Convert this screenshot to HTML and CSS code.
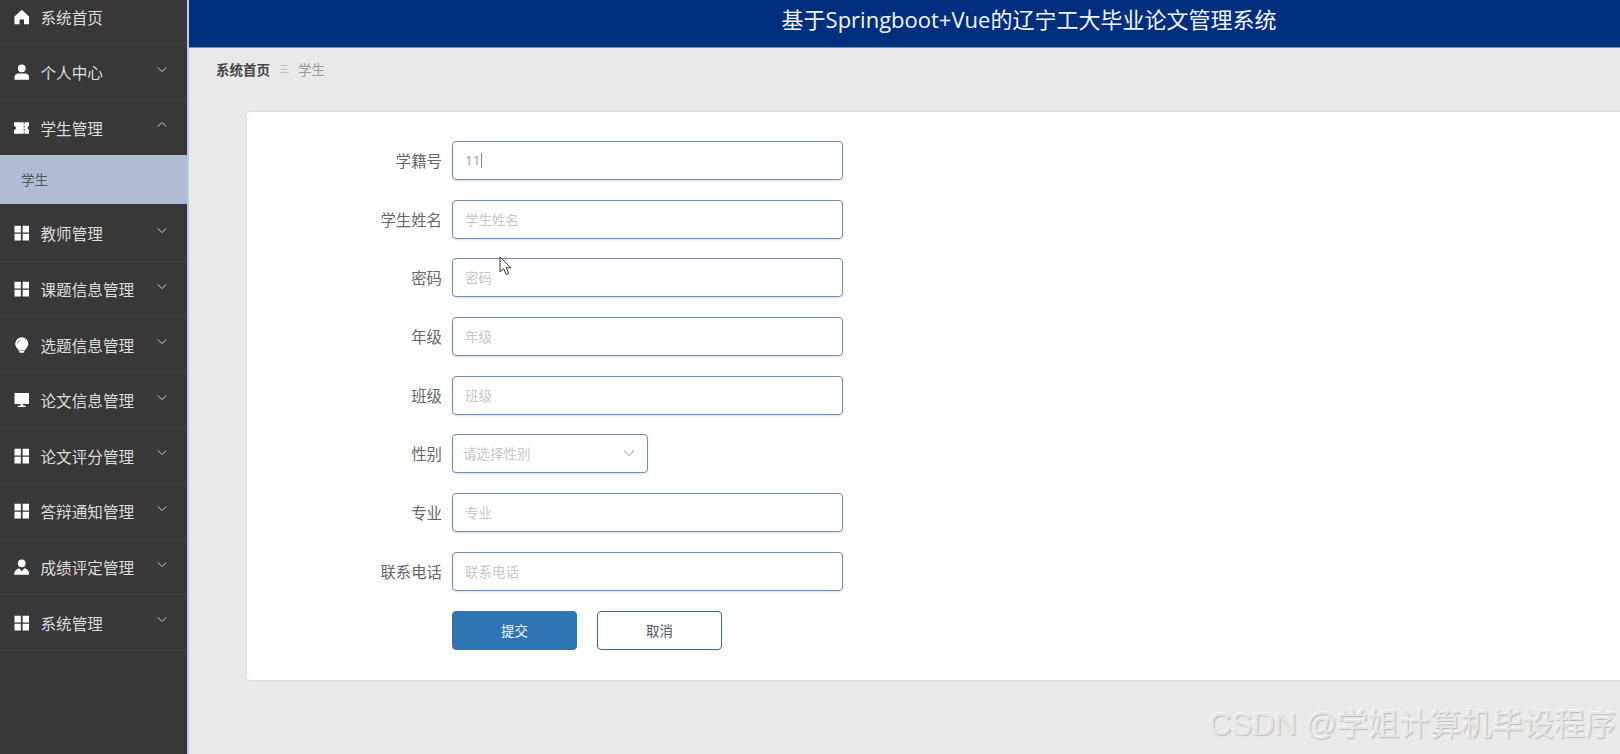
FILE: index.html
```html
<!DOCTYPE html>
<html lang="zh-CN">
<head>
    <meta charset="UTF-8">
    <title>辽宁工大毕业论文管理系统</title>
    <link rel="stylesheet" href="styles.css">
</head>
<body>
    <svg class="svg-defs" width="0" height="0">
        <symbol id="i-grid" viewBox="0 0 16 16"><path d="M.5.500h6.600v7H.5zM8.900.500h6.600v7H8.900zM.5 8.800h6.600v7H.5zM8.900 8.800h6.600v7H8.900z"/></symbol>
        <symbol id="i-down" viewBox="0 0 12 8"><path d="M1 1.500l5 5 5-5" fill="none" stroke="currentColor" stroke-width="1.100"/></symbol>
        <symbol id="i-up" viewBox="0 0 12 8"><path d="M1 6.500l5-5 5 5" fill="none" stroke="currentColor" stroke-width="1.100"/></symbol>
    </svg>

    <aside class="sidebar">
        <ul class="menu">
            <li class="menu-item menu-first">
                <svg class="icon" viewBox="0 0 16 16"><path d="M8 .5L.5 7.500V15.500h5.200v-5h4.600v5h5.200V7.500z"/></svg>
                <span class="menu-text">系统首页</span>
            </li>
            <li class="menu-item">
                <svg class="icon" viewBox="0 0 16 16"><circle cx="8" cy="4.200" r="4"/><path d="M.5 16v-3C.5 10.800 2.500 9.500 4.800 9.500h6.400c2.300 0 4.300 1.300 4.300 3.500v3z"/></svg>
                <span class="menu-text">个人中心</span>
                <svg class="arrow"><use href="#i-down"/></svg>
            </li>
            <li class="menu-item">
                <svg class="icon" viewBox="0 0 16 16"><path d="M0 2h16v4a2 2 0 0 0 0 4v4H0v-4a2 2 0 0 0 0-4z"/><path d="M10.500 2v12" stroke="#383838" stroke-width="1" stroke-dasharray="2 1.500"/></svg>
                <span class="menu-text">学生管理</span>
                <svg class="arrow"><use href="#i-up"/></svg>
            </li>
            <li class="menu-sub">学生</li>
            <li class="menu-item">
                <svg class="icon"><use href="#i-grid"/></svg>
                <span class="menu-text">教师管理</span>
                <svg class="arrow"><use href="#i-down"/></svg>
            </li>
            <li class="menu-item">
                <svg class="icon"><use href="#i-grid"/></svg>
                <span class="menu-text">课题信息管理</span>
                <svg class="arrow"><use href="#i-down"/></svg>
            </li>
            <li class="menu-item">
                <svg class="icon" viewBox="0 0 16 16"><path d="M8 0a6.800 6.800 0 0 0-6.800 6.800c0 2.400 1.400 3.800 2.400 5.100.5.600.8 1.100.9 1.700h7c.1-.6.400-1.100.9-1.700 1-1.300 2.400-2.700 2.400-5.100A6.800 6.800 0 0 0 8 0zM5.500 14.300h5V16h-5z"/><path d="M3.600 6.500C3.700 4.400 5 3 6.800 2.600" fill="none" stroke="#777" stroke-width="0.800"/></svg>
                <span class="menu-text">选题信息管理</span>
                <svg class="arrow"><use href="#i-down"/></svg>
            </li>
            <li class="menu-item">
                <svg class="icon" viewBox="0 0 16 16"><path d="M.5.800h15v11.200H.5zM6.500 12.500h3V14H12v1.200H4V14h2.500z"/></svg>
                <span class="menu-text">论文信息管理</span>
                <svg class="arrow"><use href="#i-down"/></svg>
            </li>
            <li class="menu-item">
                <svg class="icon"><use href="#i-grid"/></svg>
                <span class="menu-text">论文评分管理</span>
                <svg class="arrow"><use href="#i-down"/></svg>
            </li>
            <li class="menu-item">
                <svg class="icon"><use href="#i-grid"/></svg>
                <span class="menu-text">答辩通知管理</span>
                <svg class="arrow"><use href="#i-down"/></svg>
            </li>
            <li class="menu-item">
                <svg class="icon" viewBox="0 0 16 16"><circle cx="8" cy="4.200" r="4"/><path d="M0 16c.3-3.700 2-5.800 5.200-6.700L8 12.500l2.800-3.200c3.200.9 4.900 3 5.200 6.700z"/></svg>
                <span class="menu-text">成绩评定管理</span>
                <svg class="arrow"><use href="#i-down"/></svg>
            </li>
            <li class="menu-item">
                <svg class="icon"><use href="#i-grid"/></svg>
                <span class="menu-text">系统管理</span>
                <svg class="arrow"><use href="#i-down"/></svg>
            </li>
        </ul>
    </aside>

    <div class="content">
        <header class="topbar">
            <h1 class="title">基于Springboot+Vue的辽宁工大毕业论文管理系统</h1>
        </header>

        <main class="main">
            <nav class="breadcrumb">
                <span class="crumb-home">系统首页</span>
                <span class="crumb-sep">三</span>
                <span class="crumb-now">学生</span>
            </nav>

            <section class="card">
                <div class="form-row">
                    <label class="form-label">学籍号</label>
                    <div class="input"><span class="value">11</span><span class="caret"></span></div>
                </div>
                <div class="form-row">
                    <label class="form-label">学生姓名</label>
                    <div class="input"><span class="placeholder">学生姓名</span></div>
                </div>
                <div class="form-row">
                    <label class="form-label">密码</label>
                    <div class="input"><span class="placeholder">密码</span></div>
                </div>
                <div class="form-row">
                    <label class="form-label">年级</label>
                    <div class="input"><span class="placeholder">年级</span></div>
                </div>
                <div class="form-row">
                    <label class="form-label">班级</label>
                    <div class="input"><span class="placeholder">班级</span></div>
                </div>
                <div class="form-row">
                    <label class="form-label">性别</label>
                    <div class="input select">
                        <span class="placeholder">请选择性别</span>
                        <svg class="select-arrow"><use href="#i-down"/></svg>
                    </div>
                </div>
                <div class="form-row">
                    <label class="form-label">专业</label>
                    <div class="input"><span class="placeholder">专业</span></div>
                </div>
                <div class="form-row">
                    <label class="form-label">联系电话</label>
                    <div class="input"><span class="placeholder">联系电话</span></div>
                </div>
                <div class="form-actions">
                    <button class="btn btn-primary">提交</button>
                    <button class="btn btn-plain">取消</button>
                </div>
            </section>
        </main>
    </div>

    <!-- mouse pointer from the recording -->
    <svg class="pointer" viewBox="0 0 14 20"><path d="M1 1v15l3.700-3.300 2.500 5.800 2.500-1.100-2.500-5.600H12z" fill="#fff" stroke="#333" stroke-width="1"/></svg>
    <div class="watermark">CSDN @学姐计算机毕设程序</div>
</body>
</html>
```

FILE: styles.css
```css
/* General Styles */
* {
    box-sizing: border-box;
    margin: 0;
    padding: 0;
}

html, body {
    height: 100%;
    overflow: hidden;
}

body {
    display: flex;
    background-color: #e9e9e9;
    font-family: "Noto Sans CJK SC", "Open Sans", sans-serif;
    color: #666;
}

.svg-defs {
    position: absolute;
}

/* Sidebar */
.sidebar {
    flex: 0 0 189px;
    background-color: #383838;
    border-right: 2px solid #b9cde2;
}

.menu {
    list-style: none;
}

.menu-item {
    display: flex;
    align-items: center;
    height: 55.6px;
    padding-left: 13.5px;
    border-bottom: 1px solid #3d3d3d;
    color: #ddd;
    font-size: 15.6px;
}

.menu-first {
    height: 45px;
    padding-bottom: 10px;
}

.icon {
    flex: 0 0 15.5px;
    width: 15.5px;
    height: 16px;
    margin-right: 11.5px;
    fill: #fff;
}

.menu-text {
    flex: 1;
}

.arrow {
    width: 10px;
    height: 7px;
    margin: 0 20px 6px 0;
    color: #ddd;
}

.menu-sub {
    height: 49px;
    line-height: 49px;
    padding-left: 21px;
    margin: -1px 0 2px;
    background-color: #b0bcd4;
    color: #555;
    font-size: 13.5px;
}

/* Header */
.content {
    flex: 1;
    min-width: 0;
    display: flex;
    flex-direction: column;
}

.topbar {
    flex: 0 0 48px;
    background-color: #002e7e;
    border-bottom: 1px solid #6f95c4;
    text-align: center;
}

.title {
    padding: 3px 0 0 249px;
    font-family: "Open Sans", "Noto Sans CJK SC", sans-serif;
    font-size: 22px;
    font-weight: 400;
    line-height: 32px;
    color: #f2f6fb;
}

/* Main area */
.main {
    flex: 1;
    padding: 0 0 0 27px;
    overflow: hidden;
}

.breadcrumb {
    display: flex;
    align-items: center;
    height: 41px;
    font-size: 13.5px;
}

.crumb-home {
    color: #444;
    font-weight: 700;
}

.crumb-sep {
    margin: 0 9px;
    font-size: 10px;
    color: #bbb;
}

.crumb-now {
    color: #999;
}

.card {
    margin: 22px -20px 0 30px;
    padding: 29px 0 30px 0;
    background-color: #fff;
    border: 1px solid #dcdcdc;
    border-radius: 4px;
}

/* Form */
.form-row {
    display: flex;
    align-items: center;
    margin-bottom: 19.7px;
}

.form-label {
    flex: 0 0 195px;
    padding-bottom: 1px;
    text-align: right;
    font-size: 15.4px;
    color: #666;
}

.input {
    display: flex;
    align-items: center;
    width: 391px;
    height: 39px;
    margin-left: 10px;
    padding: 0 12px 1px;
    border: 1px solid #6f8db8;
    border-radius: 4px;
    box-shadow: 0 1px 2px rgba(111, 141, 184, 0.25);
    font-size: 13.5px;
}

.value {
    font-family: "Open Sans", sans-serif;
    color: #999;
}

.caret {
    width: 1px;
    height: 15px;
    margin-left: 1px;
    background-color: #888;
}

.placeholder {
    color: #c8c8c8;
}

.select {
    width: 196px;
    justify-content: space-between;
    padding: 0 12px 1px 10px;
}

.select-arrow {
    width: 12px;
    height: 8px;
    color: #bbb;
}

.form-actions {
    display: flex;
    gap: 20px;
    margin: 0 0 0 205px;
}

.btn {
    width: 125px;
    height: 39px;
    border-radius: 4px;
    font-family: inherit;
    font-size: 13.5px;
}

.btn-primary {
    background-color: #2f75b3;
    border: 1px solid #2f75b3;
    color: #f4f8fc;
}

.btn-plain {
    background-color: #fff;
    border: 1px solid #3d6b8f;
    color: #4a5560;
}

/* Overlays */
.pointer {
    position: absolute;
    left: 499px;
    top: 256px;
    width: 14px;
    height: 20px;
}

.watermark {
    position: absolute;
    right: 4px;
    bottom: 11px;
    font-family: "Liberation Sans", "Noto Sans CJK SC", sans-serif;
    font-size: 31px;
    line-height: 36px;
    white-space: nowrap;
    color: #e6e6e6;
    text-shadow: 1px 1px 1px #bdbdbd, -1px -1px 0 #f6f6f6;
}
```
